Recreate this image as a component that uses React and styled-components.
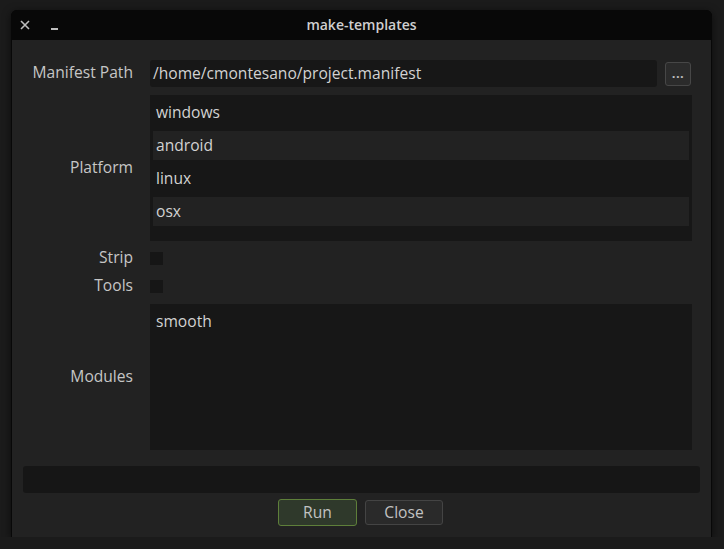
import React from 'react';
import styled, { createGlobalStyle } from 'styled-components';

const GlobalStyle = createGlobalStyle`
  html, body {
    margin: 0;
    padding: 0;
    background: #1b1b1b;
    font-family: "Open Sans", "Noto Sans", sans-serif;
  }
`;

const platforms = ['windows', 'android', 'linux', 'osx'];

const App = () => {
  return (
    <>
      <GlobalStyle />
      <Window>
        <TitleBar>
          <TitleButtons>
            <CloseGlyph viewBox="0 0 10 10">
              <path d="M1 1 L9 9 M9 1 L1 9" />
            </CloseGlyph>
            <Minimize />
          </TitleButtons>
          <Title>make-templates</Title>
        </TitleBar>
        <Body>
          <Form>
            <Label>Manifest Path</Label>
            <PathRow>
              <PathInput>/home/cmontesano/project.manifest</PathInput>
              <BrowseButton>...</BrowseButton>
            </PathRow>

            <Label>Platform</Label>
            <ListBox height={146}>
              {platforms.map((p, i) => (
                <ListItem key={p} alt={i % 2 === 1}>
                  {p}
                </ListItem>
              ))}
            </ListBox>

            <Label>Strip</Label>
            <CheckRow>
              <Checkbox />
            </CheckRow>

            <Label>Tools</Label>
            <CheckRow>
              <Checkbox />
            </CheckRow>

            <Label>Modules</Label>
            <ListBox height={146}>
              <ListItem>smooth</ListItem>
            </ListBox>
          </Form>
          <StatusBar />
          <Actions>
            <Button primary>Run</Button>
            <Button>Close</Button>
          </Actions>
        </Body>
      </Window>
    </>
  );
};

export default App;

const Window = styled.div`
  margin: 10px 0 0 11px;
  width: 701px;
  border-radius: 6px 6px 0 0;
  background: #080808;
  box-shadow: 0 2px 8px rgba(0, 0, 0, 0.6);
  overflow: hidden;
`;

const TitleBar = styled.div`
  position: relative;
  height: 30px;
  display: flex;
  align-items: center;
  justify-content: center;
  background: #080808;
`;

const TitleButtons = styled.div`
  position: absolute;
  left: 9px;
  top: 10px;
  display: flex;
  align-items: flex-end;
  gap: 21px;
`;

const CloseGlyph = styled.svg`
  width: 10px;
  height: 10px;
  stroke: #bdbdbd;
  stroke-width: 1.6;
  fill: none;
`;

const Minimize = styled.div`
  width: 7px;
  height: 2px;
  background: #bdbdbd;
`;

const Title = styled.div`
  color: #cfcfcf;
  font-weight: 600;
  font-size: 14px;
  margin-top: -1px;
`;

const Body = styled.div`
  margin: 0 1px;
  background: #222222;
  padding: 20px 11px 11px;
  display: flex;
  flex-direction: column;
`;

const Form = styled.div`
  display: grid;
  grid-template-columns: 110px 1fr;
  column-gap: 17px;
  row-gap: 8px;
  margin-right: 8px;
`;

const Label = styled.div`
  display: flex;
  align-items: center;
  justify-content: flex-end;
  color: #c6c6c6;
  font-size: 15.6px;
  line-height: 17px;
  padding-bottom: 2px;
`;

const PathRow = styled.div`
  display: flex;
  align-items: center;
  gap: 8px;
`;

const PathInput = styled.div`
  flex: 1;
  height: 27px;
  box-sizing: border-box;
  padding: 0 3px 2px;
  display: flex;
  align-items: center;
  background: #171717;
  border-radius: 3px;
  color: #d2d2d2;
  font-size: 15.6px;
`;

const BrowseButton = styled.div`
  width: 26px;
  height: 24px;
  box-sizing: border-box;
  border: 1px solid #474747;
  border-radius: 3px;
  background: #2b2b2b;
  color: #bdbdbd;
  font-size: 13px;
  font-weight: 700;
  letter-spacing: 0.5px;
  display: flex;
  align-items: flex-end;
  justify-content: center;
  padding-bottom: 5px;
  line-height: 1;
  margin-right: 1px;
`;

const ListBox = styled.div`
  height: ${(p) => p.height}px;
  box-sizing: border-box;
  background: #171717;
  padding: 3px;
  display: flex;
  flex-direction: column;
  gap: 4px;
`;

const ListItem = styled.div`
  height: 29px;
  flex-shrink: 0;
  box-sizing: border-box;
  padding: 0 0 2px 3px;
  display: flex;
  align-items: center;
  background: ${(p) => (p.alt ? '#222222' : 'transparent')};
  color: #d2d2d2;
  font-size: 15.6px;
`;

const CheckRow = styled.div`
  height: 19.5px;
  display: flex;
  align-items: center;
`;

const Checkbox = styled.div`
  width: 13px;
  height: 13px;
  background: #161616;
`;

const StatusBar = styled.div`
  margin-top: 16px;
  height: 27px;
  background: #161616;
  border-radius: 3px;
`;

const Actions = styled.div`
  margin-top: 6px;
  display: flex;
  justify-content: center;
  gap: 8px;
  padding-right: 2px;
`;

const Button = styled.div`
  width: ${(p) => (p.primary ? '79px' : '78px')};
  height: ${(p) => (p.primary ? '27px' : '25px')};
  box-sizing: border-box;
  border: 1px solid ${(p) => (p.primary ? '#5e7f3a' : '#444444')};
  border-radius: 3px;
  background: ${(p) => (p.primary ? '#2f392b' : '#2a2a2a')};
  color: #c2c2c2;
  font-size: 15.6px;
  padding-bottom: 2px;
  display: flex;
  align-items: center;
  justify-content: center;
  align-self: center;
`;
